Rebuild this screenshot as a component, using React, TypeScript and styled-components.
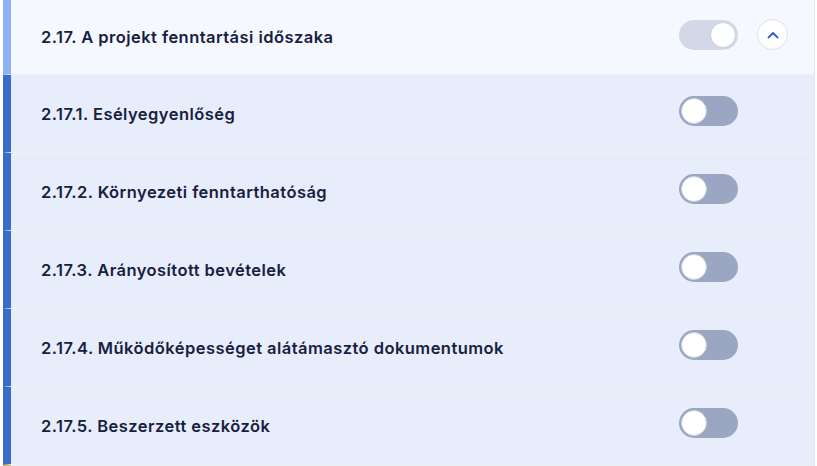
import React from 'react'
import styled, { createGlobalStyle } from 'styled-components'

const GlobalStyle = createGlobalStyle`
    html, body {
        margin: 0;
        padding: 0;
        background: #ffffff;
    }
    body {
        font-family: Inter, "Noto Sans", sans-serif;
    }
`

const Card = styled.div`
    margin-left: 3px;
    width: 811px;
    border-right: 1px solid #e3e7f1;
    display: flex;
    flex-direction: column;
`

const Row = styled.div<{ $header?: boolean }>`
    display: flex;
    align-items: center;
    height: ${({ $header }) => ($header ? '75px' : '78px')};
    padding-left: 30px;
    padding-right: 26px;
    background: ${({ $header }) => ($header ? '#f5f8ff' : '#e8edfc')};
    border-left: 8px solid ${({ $header }) => ($header ? '#8fb2f3' : '#3a6dc8')};
    border-bottom: 1px solid #eef1f8;
    box-sizing: border-box;
`

const Title = styled.div`
    flex: 1;
    font-size: 16.5px;
    font-weight: 600;
    color: #17213f;
    letter-spacing: 0.45px;
`

const Track = styled.div<{ $muted?: boolean }>`
    position: relative;
    width: 59px;
    height: 30px;
    margin-bottom: 5px;
    border-radius: 15px;
    background: ${({ $muted }) => ($muted ? '#d2d8e6' : '#9ba6c3')};
    flex-shrink: 0;
`

const Knob = styled.div<{ $on?: boolean }>`
    position: absolute;
    top: 2px;
    left: ${({ $on }) => ($on ? '31px' : '2px')};
    width: 26px;
    height: 26px;
    border-radius: 50%;
    background: #ffffff;
    box-sizing: border-box;
    border: 1px solid #c7cede;
`

const Slot = styled.div`
    width: 50px;
    display: flex;
    justify-content: flex-end;
    flex-shrink: 0;
    margin-bottom: 5px;
`

const CircleButton = styled.button`
    width: 31px;
    height: 31px;
    border-radius: 50%;
    border: 1px solid #dde2ee;
    background: #ffffff;
    display: flex;
    align-items: center;
    justify-content: center;
    padding: 0;
    cursor: pointer;
`

const Bottom = styled.div`
    height: 4px;
    border-left: 8px solid #f2b824;
    background: #e8edfc;
`

const items = [
    '2.17.1. Esélyegyenlőség',
    '2.17.2. Környezeti fenntarthatóság',
    '2.17.3. Arányosított bevételek',
    '2.17.4. Működőképességet alátámasztó dokumentumok',
    '2.17.5. Beszerzett eszközök',
]

function Toggle({ on, muted }: { on?: boolean; muted?: boolean }) {
    return (
        <Track $muted={muted}>
            <Knob $on={on} />
        </Track>
    )
}

export default function App() {
    return (
        <>
            <GlobalStyle />
            <Card>
                <Row $header>
                    <Title>2.17. A projekt fenntartási időszaka</Title>
                    <Toggle on muted />
                    <Slot>
                        <CircleButton aria-label="collapse">
                            <svg width="12" height="8" viewBox="0 0 12 8" fill="none">
                                <path d="M1.5 6.5 L6 2 L10.5 6.5" stroke="#2b63d9" strokeWidth="1.8" strokeLinecap="round" strokeLinejoin="round" />
                            </svg>
                        </CircleButton>
                    </Slot>
                </Row>
                {items.map(label => (
                    <Row key={label}>
                        <Title>{label}</Title>
                        <Toggle />
                        <Slot />
                    </Row>
                ))}
                <Bottom />
            </Card>
        </>
    )
}
